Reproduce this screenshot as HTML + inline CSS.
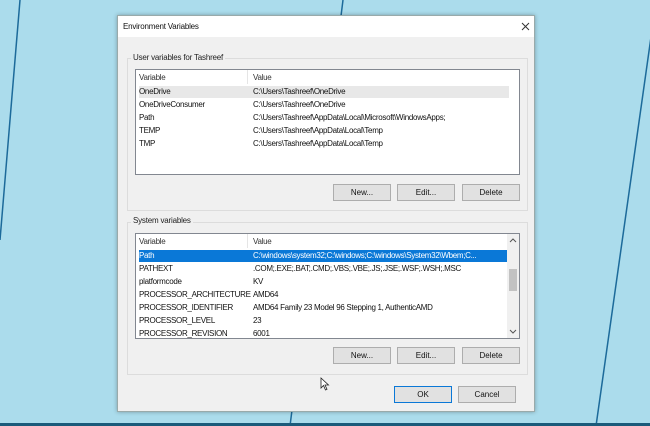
<!DOCTYPE html>
<html><head><style>
*{margin:0;padding:0;box-sizing:border-box}
body{width:650px;height:426px;overflow:hidden;background:#abdcec;font-family:"Liberation Sans",sans-serif;font-size:8px;color:#111;position:relative}
.abs{position:absolute}
.dlg{left:117px;top:15px;width:418px;height:397px;background:#f0f0f0;border:1px solid #9aa;box-shadow:0 0 4px rgba(0,0,0,.3)}
.title{left:0;top:0;width:416px;height:21px;background:#fff}
.grp{border:1px solid #dcdcdc}
.lbl{background:#f0f0f0;padding:0 2px;color:#222}
.lv{background:#fff;border:1px solid #828790}
.btn{background:#e1e1e1;border:1px solid #adadad;text-align:center;line-height:16px;font-size:8px}
.row{position:absolute;left:3px;height:12px;line-height:12px;white-space:nowrap;letter-spacing:-0.3px}
.row span{position:absolute;left:114px}
</style></head><body>
<svg class="abs" style="left:0;top:0" width="650" height="426">
<line x1="20" y1="0" x2="0" y2="240" stroke="#1c6a9a" stroke-width="1.5"/>
<line x1="343" y1="0" x2="341" y2="16" stroke="#1c6a9a" stroke-width="1.5"/>
<line x1="652" y1="30" x2="596" y2="426" stroke="#1c6a9a" stroke-width="1.5"/>
<line x1="292" y1="410" x2="290" y2="426" stroke="#1c6a9a" stroke-width="1.5"/>
<rect x="0" y="423" width="650" height="3" fill="#1a5a7a"/>
</svg>
<div class="abs dlg">
 <div class="abs title"></div>
 <div class="abs" style="left:5px;top:6px;font-size:8px;letter-spacing:-0.2px">Environment Variables</div>
 <svg class="abs" style="left:403px;top:6px" width="9" height="9"><path d="M1 1L8 8M8 1L1 8" stroke="#333" stroke-width="1"/></svg>

 <div class="abs grp" style="left:9px;top:42px;width:401px;height:153px"></div>
 <div class="abs lbl" style="left:13px;top:37px;letter-spacing:-0.2px">User variables for Tashreef</div>
 <div class="abs lv" style="left:17px;top:53px;width:385px;height:106px">
  <div class="row" style="top:2px;width:370px;color:#333">Variable<span>Value</span></div>
  <div class="abs" style="left:111px;top:0;width:1px;height:14px;background:#e5e5e5"></div>
  <div class="row" style="top:16px;width:370px;background:#e8e8e8">OneDrive<span>C:\Users\Tashreef\OneDrive</span></div>
  <div class="row" style="top:29px">OneDriveConsumer<span>C:\Users\Tashreef\OneDrive</span></div>
  <div class="row" style="top:42px">Path<span>C:\Users\Tashreef\AppData\Local\Microsoft\WindowsApps;</span></div>
  <div class="row" style="top:55px">TEMP<span>C:\Users\Tashreef\AppData\Local\Temp</span></div>
  <div class="row" style="top:68px">TMP<span>C:\Users\Tashreef\AppData\Local\Temp</span></div>
 </div>
 <div class="abs btn" style="left:215px;top:168px;width:58px;height:17px">New...</div>
 <div class="abs btn" style="left:279px;top:168px;width:58px;height:17px">Edit...</div>
 <div class="abs btn" style="left:344px;top:168px;width:58px;height:17px">Delete</div>

 <div class="abs grp" style="left:9px;top:206px;width:401px;height:153px"></div>
 <div class="abs lbl" style="left:13px;top:200px;letter-spacing:-0.2px">System variables</div>
 <div class="abs lv" style="left:17px;top:217px;width:385px;height:106px;overflow:hidden">
  <div class="row" style="top:2px;width:370px;color:#333">Variable<span>Value</span></div>
  <div class="abs" style="left:111px;top:0;width:1px;height:14px;background:#e5e5e5"></div>
  <div class="row" style="top:16px;width:368px;background:#0a78d7;color:#fff">Path<span>C:\windows\system32;C:\windows;C:\windows\System32\Wbem;C...</span></div>
  <div class="row" style="top:29px">PATHEXT<span>.COM;.EXE;.BAT;.CMD;.VBS;.VBE;.JS;.JSE;.WSF;.WSH;.MSC</span></div>
  <div class="row" style="top:42px">platformcode<span>KV</span></div>
  <div class="row" style="top:55px">PROCESSOR_ARCHITECTURE<span>AMD64</span></div>
  <div class="row" style="top:68px">PROCESSOR_IDENTIFIER<span>AMD64 Family 23 Model 96 Stepping 1, AuthenticAMD</span></div>
  <div class="row" style="top:81px">PROCESSOR_LEVEL<span>23</span></div>
  <div class="row" style="top:94px">PROCESSOR_REVISION<span>6001</span></div>
  <div class="abs" style="left:371px;top:0;width:12px;height:104px;background:#f0f0f0"></div>
  <div class="abs" style="left:373px;top:35px;width:8px;height:22px;background:#c2c2c2"></div>
  <svg class="abs" style="left:373px;top:3px" width="8" height="6"><path d="M1 5L4 2L7 5" stroke="#555" fill="none"/></svg>
  <svg class="abs" style="left:373px;top:95px" width="8" height="6"><path d="M1 1L4 4L7 1" stroke="#555" fill="none"/></svg>
 </div>
 <div class="abs btn" style="left:215px;top:331px;width:58px;height:17px">New...</div>
 <div class="abs btn" style="left:279px;top:331px;width:58px;height:17px">Edit...</div>
 <div class="abs btn" style="left:344px;top:331px;width:58px;height:17px">Delete</div>

 <svg class="abs" style="left:202px;top:361px" width="10" height="14"><path d="M1 1 L1 11 L3.5 8.5 L5.5 13 L7 12.3 L5 8 L8.5 8 Z" fill="#fff" stroke="#222" stroke-width=".8"/></svg>

 <div class="abs btn" style="left:276px;top:370px;width:58px;height:17px;border:1.5px solid #0a78d7">OK</div>
 <div class="abs btn" style="left:340px;top:370px;width:58px;height:17px">Cancel</div>
</div>
</body></html>
